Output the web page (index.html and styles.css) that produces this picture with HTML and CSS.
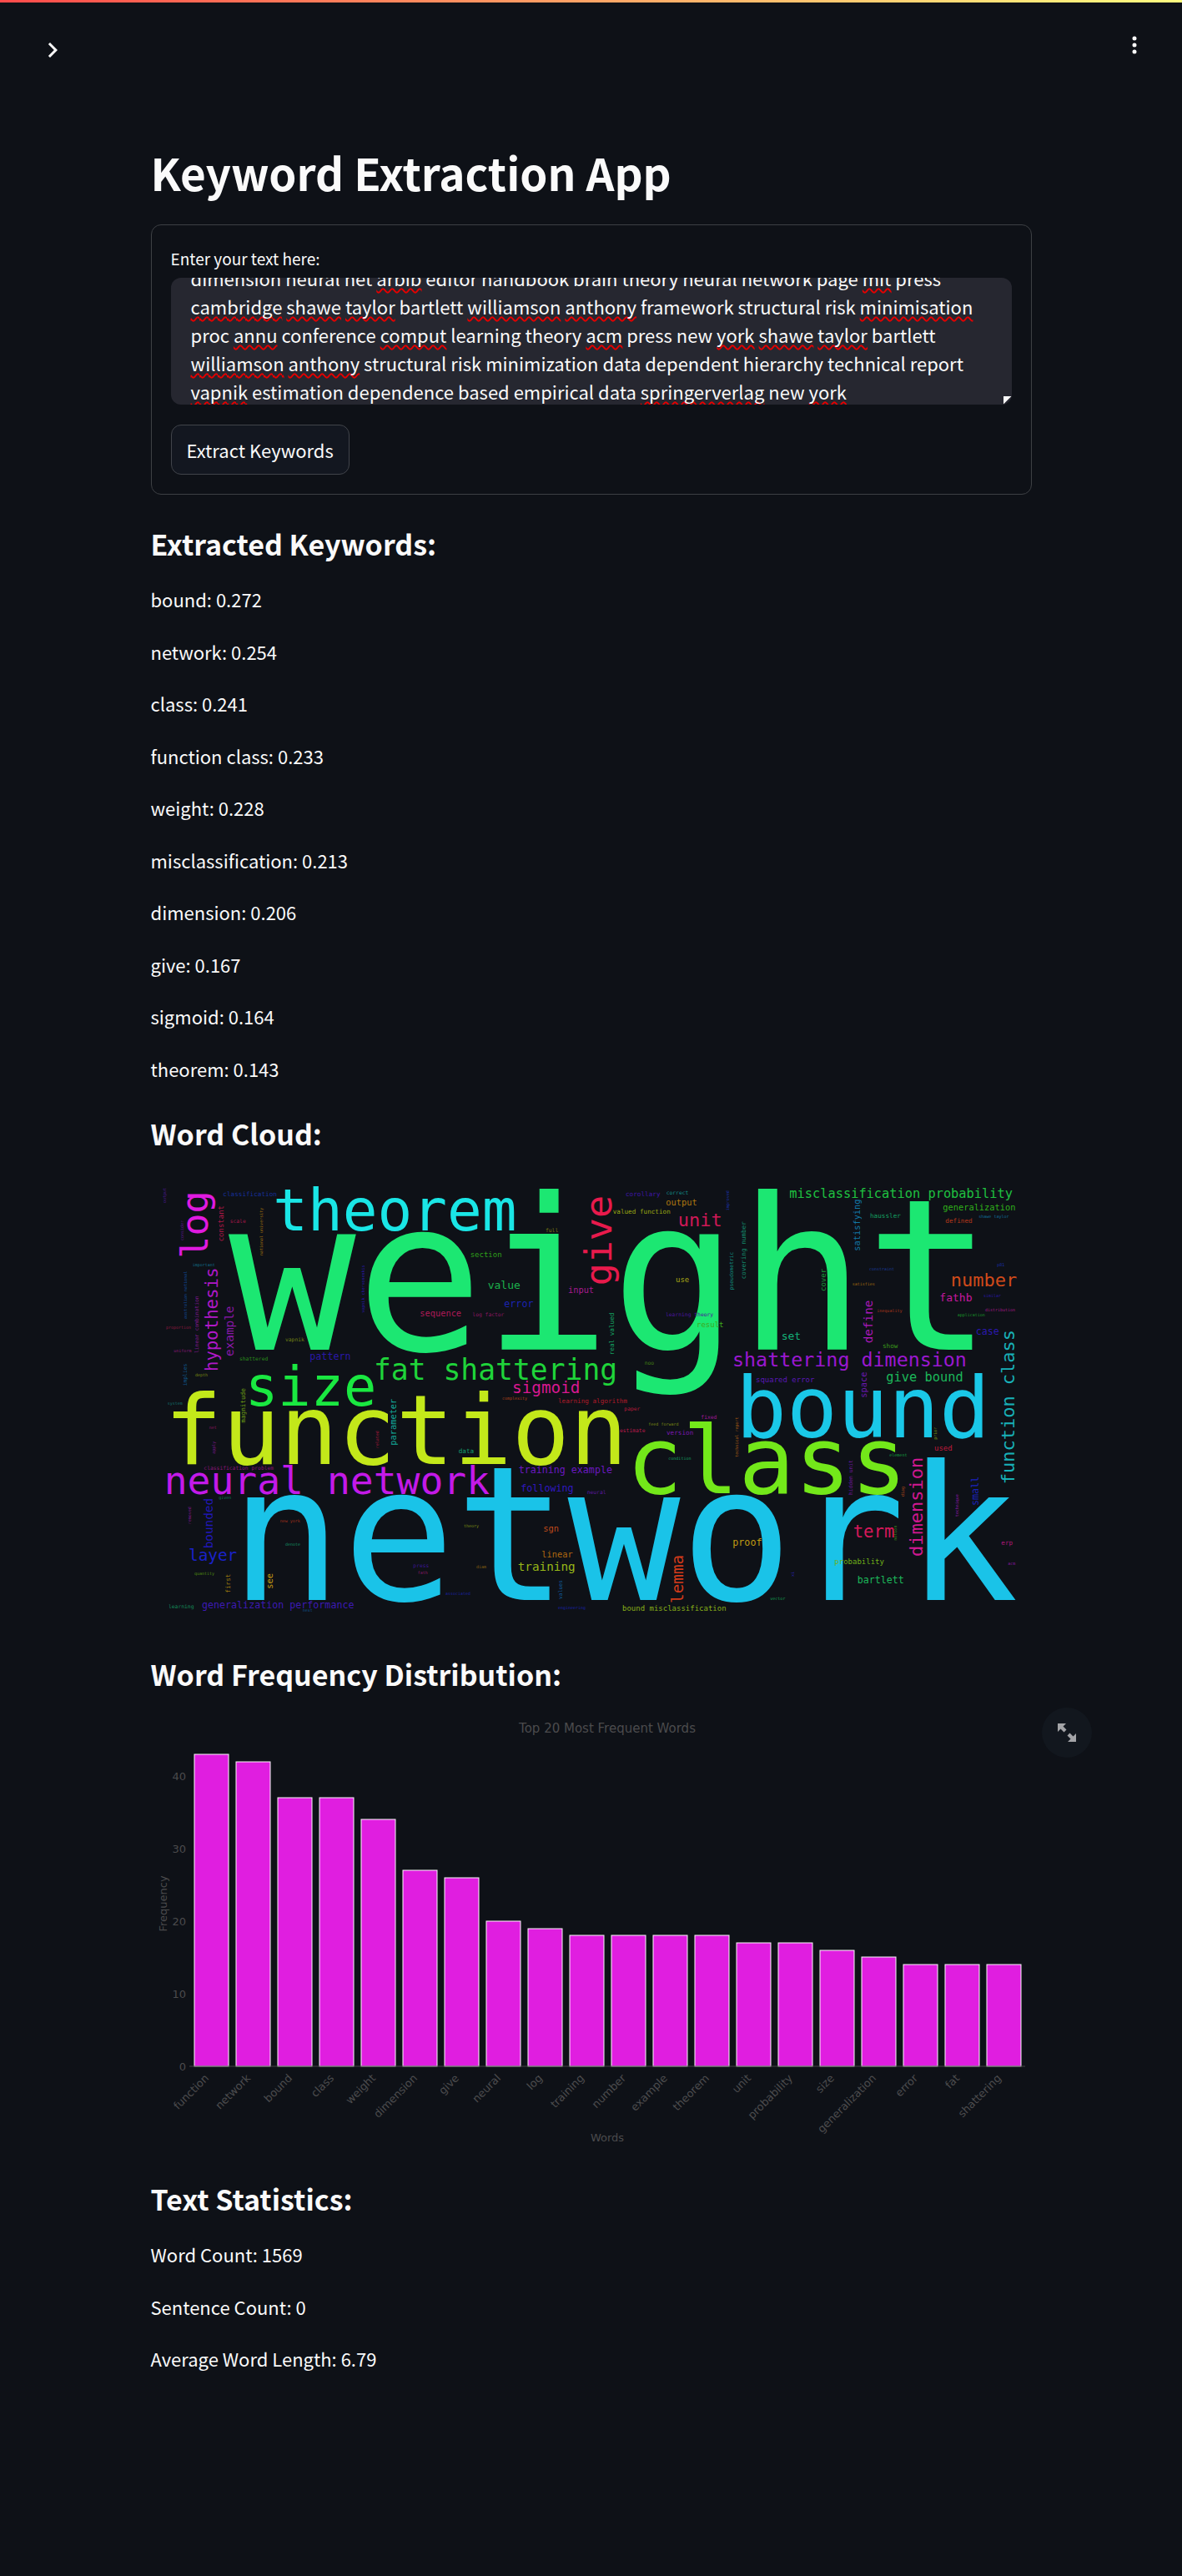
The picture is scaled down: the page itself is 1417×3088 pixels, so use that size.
FILE: index.html
```html
<!DOCTYPE html>
<html lang="en">
<head>
<meta charset="utf-8">
<title>Keyword Extraction App</title>
<meta name="viewport" content="width=device-width, initial-scale=1">
<link rel="stylesheet" href="styles.css">
</head>
<body>
<div class="decoration"></div>
<header class="toolbar">
  <button class="icon-button sidebar-toggle" type="button" aria-label="Open sidebar">
    <svg viewBox="0 0 24 24" aria-hidden="true"><path d="M8.6 7.4 13.2 12l-4.6 4.6L10 18l6-6-6-6z"/></svg>
  </button>
  <button class="icon-button main-menu" type="button" aria-label="Main menu">
    <svg viewBox="0 0 8 24" aria-hidden="true"><circle cx="4" cy="4" r="2.5"/><circle cx="4" cy="12" r="2.5"/><circle cx="4" cy="20" r="2.5"/></svg>
  </button>
</header>
<main class="page">
  <h1 class="title">Keyword Extraction App</h1>

  <form class="form">
    <label class="label" for="source">Enter your text here:</label>
    <div class="editor">
      <div class="editor-text spelling" aria-hidden="true"></div>
      <textarea class="editor-text editor-input" id="source" spellcheck="false">dimension neural net arbib editor handbook brain theory neural network page mit press cambridge shawe taylor bartlett williamson anthony framework structural risk minimisation proc annu conference comput learning theory acm press new york shawe taylor bartlett williamson anthony structural risk minimization data dependent hierarchy technical report vapnik estimation dependence based empirical data springerverlag new york</textarea>
      <span class="grip"></span>
    </div>
    <button class="submit" type="button">Extract Keywords</button>
  </form>

  <h2 class="heading">Extracted Keywords:</h2>
  <div class="lines">
    <p>bound: 0.272</p>
    <p>network: 0.254</p>
    <p>class: 0.241</p>
    <p>function class: 0.233</p>
    <p>weight: 0.228</p>
    <p>misclassification: 0.213</p>
    <p>dimension: 0.206</p>
    <p>give: 0.167</p>
    <p>sigmoid: 0.164</p>
    <p>theorem: 0.143</p>
  </div>

  <h2 class="heading">Word Cloud:</h2>
  <svg class="cloud" viewBox="39 57 3096 1548" role="img" aria-label="Word cloud">
    <text x="282" y="653" font-size="761" fill="#1ce772">weight</text>
    <text x="286" y="1555" font-size="673" fill="#1ac3e8">network</text>
    <text x="51" y="1066" font-size="346" fill="#c3e81a">function</text>
    <text x="1713" y="1170" font-size="335" fill="#73e81a">class</text>
    <text x="2106" y="969" font-size="304" fill="#1ac8e8">bound</text>
    <text x="442" y="225" font-size="208" fill="#1ae6e6">theorem</text>
    <text x="342" y="854" font-size="196" fill="#1ae841">size</text>
    <text x="50" y="1173" font-size="139" fill="#c31ae8">neural network</text>
    <text x="804" y="761" font-size="104" fill="#1fd43a">fat shattering</text>
    <text x="2094" y="715" font-size="70" fill="#9a18d0">shattering dimension</text>
    <text x="1898" y="209" font-size="66" fill="#d01856">unit</text>
    <text x="2879" y="427" font-size="66" fill="#d04a1a">number</text>
    <text x="2528" y="1328" font-size="62" fill="#d8185a">term</text>
    <text x="1302" y="811" font-size="58" fill="#d81890">sigmoid</text>
    <text x="138" y="1413" font-size="58" fill="#1a22c8">layer</text>
    <text x="2299" y="107" font-size="46" fill="#1fc040">misclassification probability</text>
    <text x="2647" y="767" font-size="46" fill="#1cb85a">give bound</text>
    <text x="1322" y="1450" font-size="43" fill="#98b818">training</text>
    <text x="1214" y="435" font-size="39" fill="#1cb04c">value</text>
    <text x="2839" y="480" font-size="39" fill="#c818a0">fathb</text>
    <text x="2270" y="618" font-size="39" fill="#14b078">set</text>
    <text x="574" y="690" font-size="35" fill="#2a18a8">pattern</text>
    <text x="186" y="1584" font-size="35" fill="#3c1ab4">generalization performance</text>
    <text x="1273" y="502" font-size="35" fill="#1a24b4">error</text>
    <text x="1325" y="1098" font-size="35" fill="#6a18c0">training example</text>
    <text x="1333" y="1165" font-size="35" fill="#3018c0">following</text>
    <text x="2969" y="599" font-size="35" fill="#2a18b0">case</text>
    <text x="2095" y="1359" font-size="35" fill="#c09a12">proof</text>
    <text x="2543" y="1494" font-size="35" fill="#1cb85a">bartlett</text>
    <text x="970" y="534" font-size="31" fill="#b01a58">sequence</text>
    <text x="1503" y="449" font-size="31" fill="#a81a90">input</text>
    <text x="1855" y="136" font-size="31" fill="#b0780f">output</text>
    <text x="1414" y="1309" font-size="31" fill="#c04a1a">sgn</text>
    <text x="1408" y="1402" font-size="31" fill="#b0680f">linear</text>
    <text x="2851" y="153" font-size="31" fill="#2fb01a">generalization</text>
    <text x="1151" y="322" font-size="27" fill="#2fa01a">section</text>
    <text x="1890" y="411" font-size="27" fill="#a8a814">use</text>
    <text x="1965" y="573" font-size="27" fill="#3fa81a">result</text>
    <text x="1698" y="1592" font-size="27" fill="#88b018">bound misclassification</text>
    <text x="2178" y="770" font-size="27" fill="#5a18b8">squared error</text>
    <text x="2820" y="1017" font-size="27" fill="#c01a3c">used</text>
    <text x="2461" y="1426" font-size="27" fill="#70b018">probability</text>
    <text x="262" y="102" font-size="23" fill="#16309c">classification</text>
    <text x="1710" y="102" font-size="23" fill="#4016a8">corollary</text>
    <text x="1664" y="164" font-size="23" fill="#9aa812">valued function</text>
    <text x="1467" y="847" font-size="23" fill="#b01a2a">learning algorithm</text>
    <text x="1857" y="960" font-size="23" fill="#7a18b0">version</text>
    <text x="1109" y="1027" font-size="23" fill="#14a070">data</text>
    <text x="2589" y="180" font-size="23" fill="#14a060">haussler</text>
    <text x="2860" y="199" font-size="23" fill="#b8381a">defined</text>
    <text x="2634" y="649" font-size="23" fill="#3a9a1a">show</text>
    <text x="3061" y="1355" font-size="23" fill="#b0187a">erp</text>
    <text x="287" y="199" font-size="19" fill="#a3174a">scale</text>
    <text x="321" y="692" font-size="19" fill="#2a8a1a">shattered</text>
    <text x="486" y="623" font-size="19" fill="#6e7f14">vapnik</text>
    <text x="193" y="1086" font-size="19" fill="#8a1578">classification problem</text>
    <text x="946" y="1437" font-size="19" fill="#3a1590">press</text>
    <text x="66" y="1583" font-size="19" fill="#148a58">learning</text>
    <text x="1422" y="232" font-size="19" fill="#7a7a14">full</text>
    <text x="1159" y="535" font-size="19" fill="#8a1660">log factor</text>
    <text x="1856" y="96" font-size="19" fill="#128a88">correct</text>
    <text x="1854" y="535" font-size="19" fill="#4a159c">learning theory</text>
    <text x="1778" y="708" font-size="19" fill="#3f7a14">noo</text>
    <text x="1705" y="873" font-size="19" fill="#b01a3a">paper</text>
    <text x="1981" y="903" font-size="19" fill="#a0189a">fixed</text>
    <text x="1689" y="951" font-size="19" fill="#b81a4c">estimate</text>
    <text x="1571" y="1173" font-size="19" fill="#5a18a0">neural</text>
    <text x="152" y="354" font-size="15" fill="#12708c">important</text>
    <text x="57" y="578" font-size="15" fill="#8f1840">proportion</text>
    <text x="85" y="662" font-size="15" fill="#8f187a">uniform</text>
    <text x="162" y="751" font-size="15" fill="#7a8a12">depth</text>
    <text x="62" y="851" font-size="15" fill="#12706a">system</text>
    <text x="212" y="939" font-size="15" fill="#8a1560">net</text>
    <text x="247" y="1190" font-size="15" fill="#0f7a50">given</text>
    <text x="467" y="1275" font-size="15" fill="#a0301a">new york</text>
    <text x="486" y="1360" font-size="15" fill="#128a60">denote</text>
    <text x="159" y="1465" font-size="15" fill="#4f8a12">quantity</text>
    <text x="962" y="1460" font-size="15" fill="#8a1a6a">fath</text>
    <text x="548" y="1596" font-size="15" fill="#10508a">next</text>
    <text x="1062" y="1537" font-size="15" fill="#1a22a0">associated</text>
    <text x="1266" y="835" font-size="15" fill="#b0421a">complexity</text>
    <text x="1792" y="927" font-size="15" fill="#7a8a14">feed forward</text>
    <text x="1864" y="1051" font-size="15" fill="#14a060">condition</text>
    <text x="1128" y="1294" font-size="15" fill="#7a8a14">theory</text>
    <text x="1173" y="1441" font-size="15" fill="#8a6010">diam</text>
    <text x="1467" y="1588" font-size="15" fill="#1a22a8">engineering</text>
    <text x="2980" y="180" font-size="15" fill="#12709a">shawe taylor</text>
    <text x="2586" y="369" font-size="15" fill="#1a3a9a">constraint</text>
    <text x="2525" y="422" font-size="15" fill="#a06a10">satisfies</text>
    <text x="3046" y="353" font-size="15" fill="#1a30a8">p81</text>
    <text x="2997" y="465" font-size="15" fill="#2a18a8">similar</text>
    <text x="3003" y="515" font-size="15" fill="#a8188a">distribution</text>
    <text x="2903" y="534" font-size="15" fill="#1a9a2a">application</text>
    <text x="2614" y="519" font-size="15" fill="#b0381a">inequality</text>
    <text x="2659" y="1039" font-size="15" fill="#14a040">element</text>
    <text x="3085" y="1429" font-size="15" fill="#8a18a0">acm</text>
    <text x="2230" y="1555" font-size="15" fill="#14a050">vector</text>
    <text transform="translate(208 326) rotate(-90)" font-size="135" fill="#e01ae0">log</text>
    <text transform="translate(1660 424) rotate(-90)" font-size="135" fill="#e81a4c">give</text>
    <text transform="translate(3107 1138) rotate(-90)" font-size="66" fill="#18b0b8">function class</text>
    <text transform="translate(2778 1398) rotate(-90)" font-size="66" fill="#d01890">dimension</text>
    <text transform="translate(243 732) rotate(-90)" font-size="62" fill="#b018c8">hypothesis</text>
    <text transform="translate(1918 1566) rotate(-90)" font-size="58" fill="#d03a1a">lemma</text>
    <text transform="translate(300 678) rotate(-90)" font-size="43" fill="#8818a8">example</text>
    <text transform="translate(224 1369) rotate(-90)" font-size="43" fill="#2018b8">bounded</text>
    <text transform="translate(2597 631) rotate(-90)" font-size="43" fill="#a818b8">define</text>
    <text transform="translate(2979 1215) rotate(-90)" font-size="35" fill="#1a22b8">small</text>
    <text transform="translate(885 998) rotate(-90)" font-size="31" fill="#12a89a">parameter</text>
    <text transform="translate(440 1514) rotate(-90)" font-size="31" fill="#c09a12">see</text>
    <text transform="translate(2552 299) rotate(-90)" font-size="31" fill="#1278a8">satisfying</text>
    <text transform="translate(2578 827) rotate(-90)" font-size="31" fill="#6a18b0">space</text>
    <text transform="translate(263 265) rotate(-90)" font-size="27" fill="#b01848">constant</text>
    <text transform="translate(2431 444) rotate(-90)" font-size="27" fill="#1a9a3a">cover</text>
    <text transform="translate(343 917) rotate(-90)" font-size="23" fill="#6a9a14">magnitude</text>
    <text transform="translate(289 1529) rotate(-90)" font-size="23" fill="#98780f">first</text>
    <text transform="translate(1668 673) rotate(-90)" font-size="23" fill="#14a060">real valued</text>
    <text transform="translate(2142 400) rotate(-90)" font-size="23" fill="#14886a">covering number</text>
    <text transform="translate(173 666) rotate(-90)" font-size="19" fill="#7a1888">linear combination</text>
    <text transform="translate(131 784) rotate(-90)" font-size="19" fill="#10588a">implies</text>
    <text transform="translate(2098 439) rotate(-90)" font-size="19" fill="#12887a">pseudometric</text>
    <text transform="translate(1482 1551) rotate(-90)" font-size="19" fill="#10589a">values</text>
    <text transform="translate(2525 1176) rotate(-90)" font-size="19" fill="#6a189a">hidden unit</text>
    <text transform="translate(58 126) rotate(-90)" font-size="15" fill="#4a1888">output</text>
    <text transform="translate(119 261) rotate(-90)" font-size="15" fill="#5a188a">consider</text>
    <text transform="translate(405 315) rotate(-90)" font-size="15" fill="#a0700f">national university</text>
    <text transform="translate(771 521) rotate(-90)" font-size="15" fill="#2a18a8">vapnik chervonenkis</text>
    <text transform="translate(132 543) rotate(-90)" font-size="15" fill="#104a9a">australian national</text>
    <text transform="translate(822 1009) rotate(-90)" font-size="15" fill="#a8183a">related</text>
    <text transform="translate(235 1028) rotate(-90)" font-size="15" fill="#7a188a">apply</text>
    <text transform="translate(147 1282) rotate(-90)" font-size="15" fill="#7a188a">removed</text>
    <text transform="translate(2082 154) rotate(-90)" font-size="15" fill="#1a30a0">improved</text>
    <text transform="translate(2115 1040) rotate(-90)" font-size="15" fill="#a85a14">technical report</text>
    <text transform="translate(2829 977) rotate(-90)" font-size="15" fill="#7a9a14">prior</text>
    <text transform="translate(2713 1182) rotate(-90)" font-size="15" fill="#b0481a">diag</text>
    <text transform="translate(2686 1340) rotate(-90)" font-size="15" fill="#3a8a1a">notion</text>
    <text transform="translate(2907 1255) rotate(-90)" font-size="15" fill="#9018a8">technique</text>
    <text transform="translate(2315 1470) rotate(-90)" font-size="15" fill="#2a22b0">xi</text>
  </svg>

  <h2 class="heading">Word Frequency Distribution:</h2>
  <div class="figure">
    <svg class="chart" viewBox="0 0 1056 523" role="img" aria-label="Top 20 Most Frequent Words">
      <text class="chart-title" x="547" y="23" text-anchor="middle">Top 20 Most Frequent Words</text>
      <g class="ticks" text-anchor="end">
        <text x="42" y="428">0</text>
        <text x="42" y="341">10</text>
        <text x="42" y="254">20</text>
        <text x="42" y="167">30</text>
        <text x="42" y="80">40</text>
      </g>
      <g class="bars"></g>
      <path class="axis" d="M46 423H1048"/>
      <g class="ticks words" text-anchor="end"></g>
      <text class="ticks" x="547" y="513" text-anchor="middle">Words</text>
      <text class="ticks" transform="translate(19 228) rotate(-90)" text-anchor="middle">Frequency</text>
    </svg>
    <button class="fullscreen" type="button" aria-label="View fullscreen">
      <svg viewBox="0 0 22 22" aria-hidden="true"><path d="M0 0h10L6.500 3.500 10.500 7.500 7.500 10.500 3.500 6.500 0 10zM22 22H12l3.500-3.500-4-4 3-3 4 4L22 12z"/></svg>
    </button>
  </div>

  <h2 class="heading">Text Statistics:</h2>
  <div class="lines">
    <p>Word Count: 1569</p>
    <p>Sentence Count: 0</p>
    <p>Average Word Length: 6.79</p>
  </div>
</main>
<script src="app.js"></script>
</body>
</html>
```
FILE: styles.css
```css
* { box-sizing: border-box; }

body {
  margin: 0;
  background: #0e1117;
  color: #fafafa;
  font-family: "Noto Sans CJK SC", "Noto Sans", sans-serif;
  font-size: 22px;
}

button, textarea { font: inherit; color: inherit; }

.decoration {
  height: 3px;
  background: linear-gradient(90deg, #ff4b4b, #fffd80);
}

.toolbar {
  display: flex;
  justify-content: space-between;
  align-items: flex-start;
  padding: 39px 48px 0 45px;
}

.icon-button {
  display: flex;
  padding: 0;
  border: 0;
  background: none;
}
.icon-button svg { fill: #fafafa; }
.sidebar-toggle svg { width: 36px; height: 36px; }
.main-menu svg { width: 18px; height: 24px; }

.page {
  max-width: 1056px;
  margin: 0 auto;
  padding: 89px 0 240px;
}

.title {
  margin: 0 0 24px;
  font-size: 53px;
  line-height: 78px;
  font-weight: 700;
}

.form {
  display: flex;
  flex-direction: column;
  align-items: flex-start;
  padding: 23px;
  border: 1px solid #3d4044;
  border-radius: 12px;
}

.label {
  font-size: 19px;
  line-height: 34px;
  margin-bottom: 6px;
}

.editor {
  position: relative;
  width: 100%;
  height: 152px;
  margin-bottom: 24px;
  border-radius: 12px;
  background: #262730;
  overflow: hidden;
}

.editor-text {
  display: block;
  width: 100%;
  height: 100%;
  margin: 0;
  padding: 18px 24px;
  border: 0;
  outline: 0;
  background: none;
  line-height: 34px;
  white-space: pre-wrap;
  overflow-wrap: break-word;
  overflow: auto;
  resize: none;
  scrollbar-width: none;
}
.editor-input { position: relative; }
.spelling {
  position: absolute;
  inset: 0;
  color: transparent;
}
.spelling u {
  text-decoration: underline wavy #e60000 2px;
  text-decoration-skip-ink: none;
  text-underline-offset: 2px;
}

.grip {
  position: absolute;
  right: 0;
  bottom: 0;
  width: 10px;
  height: 10px;
  background: #fafafa;
  clip-path: polygon(0 0, 100% 0, 0 100%);
}

.submit {
  height: 60px;
  padding: 0 18px;
  border: 1px solid #41444a;
  border-radius: 12px;
  background: #131720;
}

.heading {
  margin: 0;
  padding: 34px 0 22px;
  font-size: 34px;
  line-height: 50px;
  font-weight: 700;
}

.lines {
  display: flex;
  flex-direction: column;
  gap: 24px;
}
.lines p { margin: 0; line-height: 1.75; }

.cloud {
  display: block;
  width: 100%;
  padding: 13px 12px;
  font-family: "DejaVu Sans Mono", monospace;
}

.figure { position: relative; }
.chart {
  display: block;
  width: 100%;
  font-family: "DejaVu Sans", sans-serif;
  fill: #4b4b4d;
}
.chart-title { font-size: 15px; }
.ticks { font-size: 13px; }
.axis { stroke: #444; stroke-width: 1; }
.bars { fill: #e01ee0; stroke: #fafafa; stroke-width: 1; }

.fullscreen {
  position: absolute;
  top: -7px;
  right: -72px;
  display: flex;
  align-items: center;
  justify-content: center;
  width: 60px;
  height: 60px;
  padding: 0;
  border: 0;
  border-radius: 50%;
  background: #12171e;
}
.fullscreen svg { width: 22px; height: 22px; fill: #a3a4a7; }
```
FILE: app.js
```js
const frequencies = [
  ["function", 43], ["network", 42], ["bound", 37], ["class", 37], ["weight", 34],
  ["dimension", 27], ["give", 26], ["neural", 20], ["log", 19], ["training", 18],
  ["number", 18], ["example", 18], ["theorem", 18], ["unit", 17], ["probability", 17],
  ["size", 16], ["generalization", 15], ["error", 14], ["fat", 14], ["shattering", 14]
];

function svg(name, attributes, text) {
  const node = document.createElementNS("http://www.w3.org/2000/svg", name);
  for (const key in attributes) node.setAttribute(key, attributes[key]);
  if (text) node.textContent = text;
  return node;
}

// Ten counts are 87 units tall; the axis lies at 423.
const bars = document.querySelector(".bars");
const words = document.querySelector(".words");
frequencies.forEach(([word, count], i) => {
  const center = 72 + i * 50;
  const height = Math.round(count * 87 / 10);
  bars.append(svg("rect", { x: center - 20, y: 423 - height, width: 41, height }));
  words.append(svg("text", { transform: `translate(${center - 2} 438) rotate(-45)` }, word));
});

const unknown = new Set(["arbib", "mit", "cambridge", "shawe", "taylor", "williamson", "anthony",
  "minimisation", "annu", "comput", "acm", "york", "vapnik", "springerverlag"]);
const input = document.querySelector(".editor-input");
const layer = document.querySelector(".spelling");

function markSpelling() {
  layer.replaceChildren(...input.value.split(/(\s+)/).map(part => {
    if (!unknown.has(part)) return document.createTextNode(part);
    const mark = document.createElement("u");
    mark.textContent = part;
    return mark;
  }));
}

input.addEventListener("input", markSpelling);
input.addEventListener("scroll", () => { layer.scrollTop = input.scrollTop; });
markSpelling();
input.scrollTop = 35;
layer.scrollTop = 35;
```
